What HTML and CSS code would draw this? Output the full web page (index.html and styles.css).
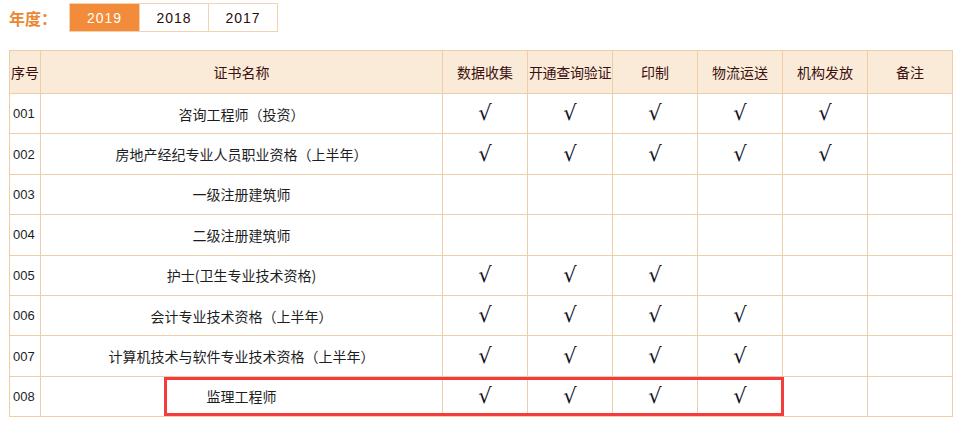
FILE: index.html
```html
<!DOCTYPE html>
<html lang="zh-CN">
<head>
<meta charset="utf-8">
<title>证书进度</title>
<link rel="stylesheet" href="styles.css">
</head>
<body>
<div class="page">
  <div class="year-bar">
    <span class="year-label">年度：</span>
    <div class="tabs">
      <span class="tab active">2019</span>
      <span class="tab">2018</span>
      <span class="tab">2017</span>
    </div>
  </div>
  <div class="table-wrap">
    <table class="cert-table">
      <colgroup>
        <col class="c-no"><col class="c-name"><col class="c-step"><col class="c-step"><col class="c-step"><col class="c-step"><col class="c-step"><col class="c-step">
      </colgroup>
      <thead>
        <tr><th>序号</th><th>证书名称</th><th>数据收集</th><th class="tight">开通查询验证</th><th>印制</th><th>物流运送</th><th>机构发放</th><th>备注</th></tr>
      </thead>
      <tbody>
        <tr><td class="no">001</td><td>咨询工程师（投资）</td><td class="ck">√</td><td class="ck">√</td><td class="ck">√</td><td class="ck">√</td><td class="ck">√</td><td></td></tr>
        <tr><td class="no">002</td><td>房地产经纪专业人员职业资格（上半年）</td><td class="ck">√</td><td class="ck">√</td><td class="ck">√</td><td class="ck">√</td><td class="ck">√</td><td></td></tr>
        <tr><td class="no">003</td><td>一级注册建筑师</td><td></td><td></td><td></td><td></td><td></td><td></td></tr>
        <tr><td class="no">004</td><td>二级注册建筑师</td><td></td><td></td><td></td><td></td><td></td><td></td></tr>
        <tr><td class="no">005</td><td>护士(卫生专业技术资格)</td><td class="ck">√</td><td class="ck">√</td><td class="ck">√</td><td></td><td></td><td></td></tr>
        <tr><td class="no">006</td><td>会计专业技术资格（上半年）</td><td class="ck">√</td><td class="ck">√</td><td class="ck">√</td><td class="ck">√</td><td></td><td></td></tr>
        <tr><td class="no">007</td><td>计算机技术与软件专业技术资格（上半年）</td><td class="ck">√</td><td class="ck">√</td><td class="ck">√</td><td class="ck">√</td><td></td><td></td></tr>
        <tr><td class="no">008</td><td>监理工程师</td><td class="ck">√</td><td class="ck">√</td><td class="ck">√</td><td class="ck">√</td><td></td><td></td></tr>
      </tbody>
    </table>
    <div class="highlight"></div>
  </div>
</div>
</body>
</html>
```
FILE: styles.css
```css
html, body {
  margin: 0;
  padding: 0;
  background: #ffffff;
}
body {
  font-family: "Noto Sans CJK SC", "Liberation Sans", sans-serif;
  font-size: 14px;
  color: #222;
}
.page {
  padding: 3px 0 0 9px;
}
.year-bar {
  display: flex;
  align-items: center;
  height: 29px;
}
.year-label {
  width: 60px;
  color: #ea8730;
  font-size: 16px;
  font-weight: bold;
  line-height: 1;
}
.tabs {
  display: flex;
  height: 29px;
  border: 1px solid #f3d2b4;
  box-sizing: border-box;
}
.tab {
  width: 69px;
  display: flex;
  align-items: center;
  justify-content: center;
  font-family: "Liberation Sans", sans-serif;
  font-size: 14px;
  letter-spacing: 1px;
  color: #2a0c0c;
  border-left: 1px solid #f3d2b4;
  box-sizing: border-box;
}
.tab:first-child {
  border-left: none;
}
.tab.active {
  background: #f28b3a;
  color: #ffffff;
}
.table-wrap {
  position: relative;
  margin-top: 18px;
  width: 943px;
}
.cert-table {
  border-collapse: collapse;
  table-layout: fixed;
  width: 943px;
}
.c-no { width: 31px; }
.c-name { width: 402px; }
.c-step { width: 85px; }
.cert-table th,
.cert-table td {
  border: 1px solid #efcdab;
  text-align: center;
  padding: 0;
  white-space: nowrap;
  overflow: hidden;
}
.cert-table th {
  height: 42px;
  background: #faebd8;
  color: #3b1010;
  font-weight: normal;
  font-size: 14px;
}
.cert-table th.tight {
  letter-spacing: -0.3px;
}
.cert-table td {
  height: 39.4px;
  color: #1e1e1e;
}
.cert-table td.no {
  text-align: left;
  padding-left: 3px;
  font-family: "Liberation Sans", sans-serif;
  font-size: 13px;
}
.cert-table td.ck {
  font-family: "DejaVu Sans", sans-serif;
  font-size: 21px;
  line-height: 1;
  color: #141428;
}
.highlight {
  position: absolute;
  left: 155px;
  top: 327px;
  width: 620px;
  height: 39px;
  border: 3px solid #f43c3c;
  box-sizing: border-box;
  pointer-events: none;
}
```
